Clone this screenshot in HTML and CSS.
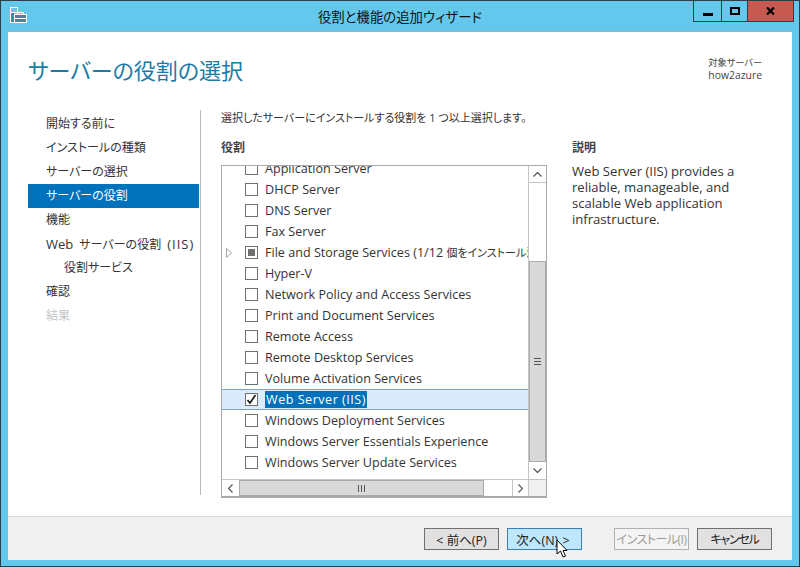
FILE: index.html
```html
<!DOCTYPE html>
<html lang="ja">
<head>
    <meta charset="UTF-8">
    <title>役割と機能の追加ウィザード</title>
    <link rel="stylesheet" href="styles.css">
</head>
<body>
    <div class="window">
        <div class="titlebar">
            <svg class="app-icon" width="17" height="17" viewBox="0 0 17 17">
                <path d="M0 0h8v6H0z M0 6h4v10H0z" fill="#fff"/>
                <path d="M1 1h6v4H1z" fill="#63c8eb"/>
                <path d="M1 6h3v9H1z" fill="#2f8fc0"/>
                <path d="M4 7h13v9H4z" fill="#fff"/>
                <path d="M7.500 7V5.500h6V7" fill="none" stroke="#fff"/>
                <path d="M5 8h11v3H5zM5 12h11v3H5z" fill="#5d7d92"/>
            </svg>
            <div class="title">役割と機能の追加ウィザード</div>
            <div class="caption-buttons">
                <div class="cap-btn cap-min"><span class="min-glyph"></span></div>
                <div class="cap-btn cap-max"><span class="max-glyph"></span></div>
                <div class="cap-btn cap-close">
                    <svg width="9" height="8" viewBox="0 0 9 8"><path d="M1 0.500l7 7M8 0.500l-7 7" stroke="#000" stroke-width="2.200"/></svg>
                </div>
            </div>
        </div>

        <div class="client">
            <div class="header">
                <h1>サーバーの役割の選択</h1>
                <div class="target"><span class="target-label">対象サーバー</span><br>how2azure</div>
            </div>

            <div class="body">
                <ul class="steps">
                    <li>開始する前に</li>
                    <li>インストールの種類</li>
                    <li>サーバーの選択</li>
                    <li class="active">サーバーの役割</li>
                    <li>機能</li>
                    <li class="mixed"><span class="latin">Web</span> サーバーの役割 <span class="iis">(IIS)</span></li>
                    <li class="sub">役割サービス</li>
                    <li>確認</li>
                    <li class="off">結果</li>
                </ul>

                <div class="main">
                    <p class="lead">選択したサーバーにインストールする役割を 1 つ以上選択します。</p>
                    <div class="columns">
                        <div class="roles">
                            <h2>役割</h2>
                            <div class="listbox">
                                <div class="list-top">
                                    <div class="list-view">
                                        <ul class="role-list">
                                            <li><span class="cb"></span>Application Server</li>
                                            <li><span class="cb"></span>DHCP Server</li>
                                            <li><span class="cb"></span>DNS Server</li>
                                            <li><span class="cb"></span>Fax Server</li>
                                            <li>
                                                <svg class="expander" width="6" height="10" viewBox="0 0 6 10"><path d="M0.500 0.500l5 4.500-5 4.500z" fill="#fff" stroke="#a6a6a6"/></svg>
                                                <span class="cb partial"></span><span class="file-role">File and Storage Services (1/12 <span class="file-role-ja">個をインストール済み</span>)</span>
                                            </li>
                                            <li><span class="cb"></span>Hyper-V</li>
                                            <li><span class="cb"></span>Network Policy and Access Services</li>
                                            <li><span class="cb"></span>Print and Document Services</li>
                                            <li><span class="cb"></span>Remote Access</li>
                                            <li><span class="cb"></span>Remote Desktop Services</li>
                                            <li><span class="cb"></span>Volume Activation Services</li>
                                            <li class="selected">
                                                <span class="cb">
                                                    <svg width="11" height="11" viewBox="0 0 11 11"><path d="M1.500 6l2.500 3 5.500-8" fill="none" stroke="#222" stroke-width="1.800"/></svg>
                                                </span><span class="sel-text">Web Server (IIS)</span>
                                            </li>
                                            <li><span class="cb"></span>Windows Deployment Services</li>
                                            <li><span class="cb"></span>Windows Server Essentials Experience</li>
                                            <li><span class="cb"></span>Windows Server Update Services</li>
                                        </ul>
                                    </div>
                                    <div class="vscroll">
                                        <div class="sb-btn sb-up"><svg width="9" height="5" viewBox="0 0 9 5"><path d="M0.500 4.500l4-4 4 4" fill="none" stroke="#555" stroke-width="1.200"/></svg></div>
                                        <div class="v-gap"></div>
                                        <div class="v-thumb"><span class="grip-h"></span></div>
                                        <div class="sb-btn sb-down"><svg width="9" height="5" viewBox="0 0 9 5"><path d="M0.500 0.500l4 4 4-4" fill="none" stroke="#555" stroke-width="1.200"/></svg></div>
                                    </div>
                                </div>
                                <div class="hscroll">
                                    <div class="sb-btn sb-left"><svg width="5" height="9" viewBox="0 0 5 9"><path d="M4.500 0.500l-4 4 4 4" fill="none" stroke="#555" stroke-width="1.200"/></svg></div>
                                    <div class="h-thumb"><span class="grip-v"></span></div>
                                    <div class="h-gap"></div>
                                    <div class="sb-btn sb-right"><svg width="5" height="9" viewBox="0 0 5 9"><path d="M0.500 0.500l4 4-4 4" fill="none" stroke="#555" stroke-width="1.200"/></svg></div>
                                    <div class="sb-corner"></div>
                                </div>
                            </div>
                        </div>
                        <div class="desc">
                            <h2>説明</h2>
                            <p>Web Server (IIS) provides a reliable, manageable, and scalable Web application infrastructure.</p>
                        </div>
                    </div>
                </div>
            </div>

            <div class="footer">
                <button class="btn">&lt; 前へ(P)</button>
                <button class="btn btn-hot">次へ(N) &gt;</button>
                <button class="btn btn-off">インストール(I)</button>
                <button class="btn btn-cancel">キャンセル</button>
            </div>
        </div>

        <svg class="cursor" width="13" height="20" viewBox="0 0 13 20">
            <path d="M1 1v14l3.500-3 2.500 6 2.500-1-2.500-5.500H11z" fill="#fff" stroke="#000"/>
        </svg>
    </div>
</body>
</html>
```

FILE: styles.css
```css
* {
    box-sizing: border-box;
}

body {
    margin: 0;
    font-family: "Open Sans", "Noto Sans CJK JP", sans-serif;
    font-feature-settings: "palt";
    font-size: 12px;
    color: #333;
}

ul {
    list-style: none;
    margin: 0;
    padding: 0;
}

.window {
    position: relative;
    width: 800px;
    height: 567px;
    display: flex;
    flex-direction: column;
    background: #63c8eb;
    border: 1px solid #2f3e48;
    overflow: hidden;
}

.titlebar {
    height: 30px;
    flex: none;
    display: flex;
    padding-left: 9px;
    position: relative;
}

.app-icon {
    margin-top: 6px;
}

.title {
    position: absolute;
    left: 0;
    right: 0;
    top: 7px;
    text-align: center;
    font-size: 13.400px;
    line-height: 18px;
    color: #111;
}

.caption-buttons {
    position: absolute;
    top: -1px;
    right: 5px;
    height: 22px;
    display: flex;
    border: 1px solid #2f3e48;
}

.cap-btn {
    height: 100%;
    display: flex;
    align-items: center;
    justify-content: center;
}

.cap-min {
    width: 28px;
    border-right: 1px solid #2f3e48;
}

.cap-max {
    width: 26px;
    border-right: 1px solid #2f3e48;
}

.cap-close {
    width: 45px;
    background: #c75a50;
}

.min-glyph {
    width: 10px;
    height: 3px;
    margin-top: 6px;
    background: #000;
}

.max-glyph {
    width: 10px;
    height: 8px;
    border: 2px solid #000;
}

.client {
    flex: 1;
    margin: 0 7px 6px;
    display: flex;
    flex-direction: column;
    background: #fff;
    border-top: 1px solid #8fb4c6;
    min-height: 0;
}

.header {
    height: 78px;
    flex: none;
    display: flex;
    justify-content: space-between;
    padding: 0 30px 0 20px;
}

h1 {
    margin: 21px 0 0;
    font-size: 22px;
    line-height: 34px;
    font-weight: 400;
    color: #1a7ba6;
}

.target {
    margin-top: 24px;
    font-size: 10.400px;
    line-height: 13px;
    text-align: right;
    color: #444;
}

.target-label {
    font-size: 9.200px;
}

.body {
    flex: 1;
    display: flex;
    min-height: 0;
}

.steps {
    width: 193px;
    flex: none;
    padding: 2px 1px 0 20px;
    border-right: 1px solid #b9b9b9;
    height: 385px;
}

.steps li {
    height: 24px;
    line-height: 24px;
    padding-left: 18px;
    font-size: 12px;
    white-space: nowrap;
    color: #333;
}

.steps .active {
    background: #0072bc;
    color: #fff;
}

.steps .sub {
    padding-left: 36px;
}

.steps .off {
    color: #c4c4c4;
}

.steps .mixed {
    word-spacing: 3px;
}

.latin {
    font-size: 13px;
}

.iis {
    font-size: 13px;
    letter-spacing: 1px;
}

.main {
    flex: 1;
    padding: 0 0 0 20px;
}

.lead {
    margin: 0;
    height: 30px;
    line-height: 16px;
    font-size: 11px;
    color: #333;
}

.columns {
    display: flex;
}

.roles {
    width: 326px;
    flex: none;
}

h2 {
    margin: 0;
    height: 25px;
    font-size: 12px;
    line-height: 16px;
    font-weight: 700;
    color: #444;
}

.listbox {
    width: 326px;
    height: 333px;
    border: 1px solid #aaa;
    border-bottom-width: 2px;
    display: flex;
    flex-direction: column;
}

.list-top {
    height: 313px;
    flex: none;
    display: flex;
}

.list-view {
    flex: 1;
    min-width: 0;
    overflow: hidden;
}

.role-list {
    margin-top: -8px;
}

.role-list li {
    height: 21px;
    display: flex;
    align-items: center;
    padding-left: 23px;
    position: relative;
    white-space: nowrap;
    font-size: 12.600px;
    color: #333;
}

.file-role-ja {
    font-size: 11px;
}

.cb {
    width: 13px;
    height: 13px;
    flex: none;
    margin-right: 7px;
    border: 1px solid #707070;
    background: #fff;
    display: flex;
    align-items: center;
    justify-content: center;
}

.cb.partial::after {
    content: "";
    width: 7px;
    height: 7px;
    background: #707070;
}

.expander {
    position: absolute;
    left: 4px;
    top: 6px;
}

.role-list .selected {
    background: #dcebfc;
    border-top: 1px solid #7da2ce;
    border-bottom: 1px solid #7da2ce;
}

.sel-text {
    background: #0072bc;
    color: #fff;
    padding: 0 1px;
    line-height: 17px;
    letter-spacing: 0.500px;
}

.vscroll {
    width: 18px;
    flex: none;
    display: flex;
    flex-direction: column;
    border-left: 1px solid #c4c4c4;
}

.sb-btn {
    flex: none;
    display: flex;
    align-items: center;
    justify-content: center;
    background: #fff;
}

.sb-up {
    height: 17px;
    border-bottom: 1px solid #c4c4c4;
}

.sb-down {
    height: 17px;
}

.v-gap {
    flex: 1;
}

.v-thumb {
    height: 201px;
    flex: none;
    background: #d9d9d9;
    border: 1px solid #aaa;
    display: flex;
    align-items: center;
    justify-content: center;
}

.grip-h {
    width: 7px;
    height: 7px;
    background: repeating-linear-gradient(to bottom, #555 0, #555 1px, #d9d9d9 1px, #d9d9d9 3px);
}

.hscroll {
    height: 17px;
    flex: none;
    display: flex;
    border-top: 1px solid #c4c4c4;
}

.sb-left {
    width: 17px;
}

.h-thumb {
    width: 245px;
    flex: none;
    background: #d9d9d9;
    border: 1px solid #aaa;
    display: flex;
    align-items: center;
    justify-content: center;
}

.grip-v {
    width: 7px;
    height: 7px;
    background: repeating-linear-gradient(to right, #555 0, #555 1px, #d9d9d9 1px, #d9d9d9 3px);
}

.h-gap {
    flex: 1;
}

.sb-right {
    width: 17px;
    border-left: 1px solid #c4c4c4;
    border-right: 1px solid #c4c4c4;
}

.sb-corner {
    width: 17px;
    flex: none;
    background: #f0f0f0;
}

.desc {
    flex: 1;
    padding: 0 30px 0 25px;
}

.desc p {
    margin: -2px 0 0;
    font-size: 13.100px;
    line-height: 16px;
    color: #333;
}

.footer {
    height: 44px;
    flex: none;
    display: flex;
    justify-content: flex-end;
    align-items: flex-start;
    padding: 11px 20px 0 0;
    background: #f0f0f0;
    border-top: 1px solid #dcdcdc;
}

.btn {
    width: 75px;
    height: 22px;
    margin-left: 8px;
    padding: 0;
    font-family: inherit;
    font-feature-settings: inherit;
    font-size: 12.500px;
    white-space: nowrap;
    background: #e1e1e1;
    border: 1px solid #707070;
    color: #222;
}

.btn-hot {
    padding-right: 3px;
    word-spacing: 1px;
    background: #bee6fd;
    border-color: #3c7fb1;
}

.btn-off {
    margin-left: 32px;
    font-size: 12px;
    letter-spacing: -0.500px;
    background: #f4f4f4;
    border-color: #adb2b5;
    color: #9b9b9b;
}

.btn-cancel {
    font-size: 12px;
    letter-spacing: -1.200px;
}

.cursor {
    position: absolute;
    left: 555px;
    top: 538px;
}
```
